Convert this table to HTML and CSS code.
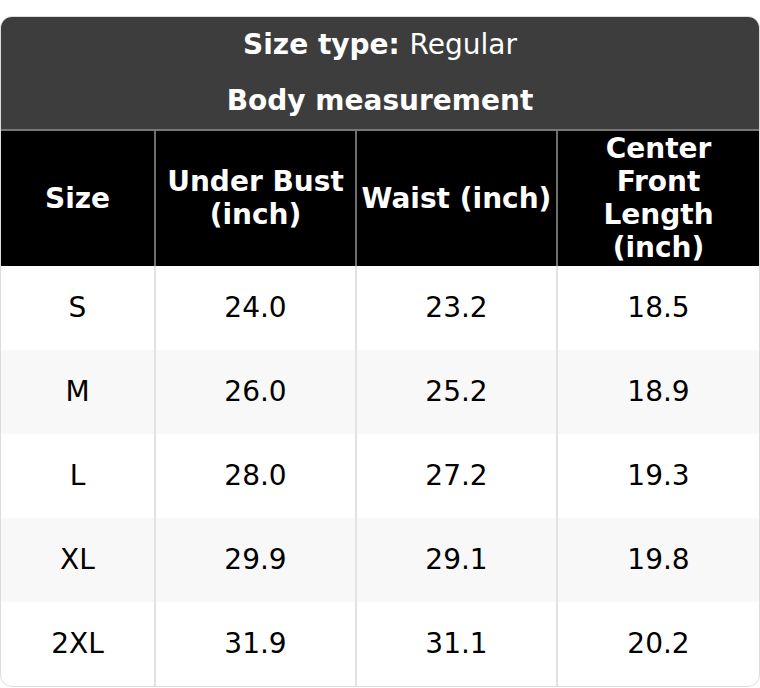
FILE: index.html
```html
<!DOCTYPE html>
<html lang="en">
<head>
<meta charset="utf-8">
<title>Size chart</title>
<link rel="stylesheet" href="styles.css">
</head>
<body>
<div class="card">
  <table class="chart">
    <colgroup>
      <col class="c-size">
      <col class="c-mid">
      <col class="c-mid">
      <col class="c-last">
    </colgroup>
    <thead>
      <tr class="title-row">
        <th colspan="4" class="title"><strong>Size type:</strong> <span class="normal">Regular</span></th>
      </tr>
      <tr class="title-row">
        <th colspan="4" class="title title-last">Body measurement</th>
      </tr>
      <tr class="head-row">
        <th>Size</th>
        <th>Under Bust (inch)</th>
        <th>Waist (inch)</th>
        <th>Center Front Length (inch)</th>
      </tr>
    </thead>
    <tbody>
      <tr><td>S</td><td>24.0</td><td>23.2</td><td>18.5</td></tr>
      <tr><td>M</td><td>26.0</td><td>25.2</td><td>18.9</td></tr>
      <tr><td>L</td><td>28.0</td><td>27.2</td><td>19.3</td></tr>
      <tr><td>XL</td><td>29.9</td><td>29.1</td><td>19.8</td></tr>
      <tr><td>2XL</td><td>31.9</td><td>31.1</td><td>20.2</td></tr>
    </tbody>
  </table>
</div>
</body>
</html>
```
FILE: styles.css
```css
html, body {
  margin: 0;
  padding: 0;
  background: #ffffff;
}

body {
  font-family: "DejaVu Sans", "Liberation Sans", sans-serif;
  color: #000000;
}

.card {
  box-sizing: border-box;
  width: 760px;
  margin-top: 16px;
  border: 1px solid #dcdcdc;
  border-radius: 12px;
  overflow: hidden;
  background: #ffffff;
}

.chart {
  width: 758px;
  table-layout: fixed;
  border-collapse: separate;
  border-spacing: 0;
  font-size: 28px;
}

.c-size { width: 153px; }
.c-mid { width: 201px; }
.c-last { width: 203px; }

.title {
  background: #3d3d3d;
  color: #ffffff;
  font-weight: 700;
  line-height: 32px;
  padding: 12px 8px;
  text-align: center;
}

.title .normal {
  font-weight: 400;
}

.title-last {
  border-bottom: 2px solid #777777;
}

.head-row th {
  background: #000000;
  color: #ffffff;
  font-weight: 700;
  line-height: 33px;
  padding: 1px 4px 2px;
  text-align: center;
  vertical-align: middle;
}

.head-row th + th {
  border-left: 2px solid #6e6e6e;
}

tbody td {
  text-align: center;
  vertical-align: middle;
  line-height: 32px;
  padding: 26px 4px;
}

tbody td + td {
  border-left: 2px solid #e2e2e2;
}

tbody tr:nth-child(even) td {
  background: #f8f8f8;
}
```
